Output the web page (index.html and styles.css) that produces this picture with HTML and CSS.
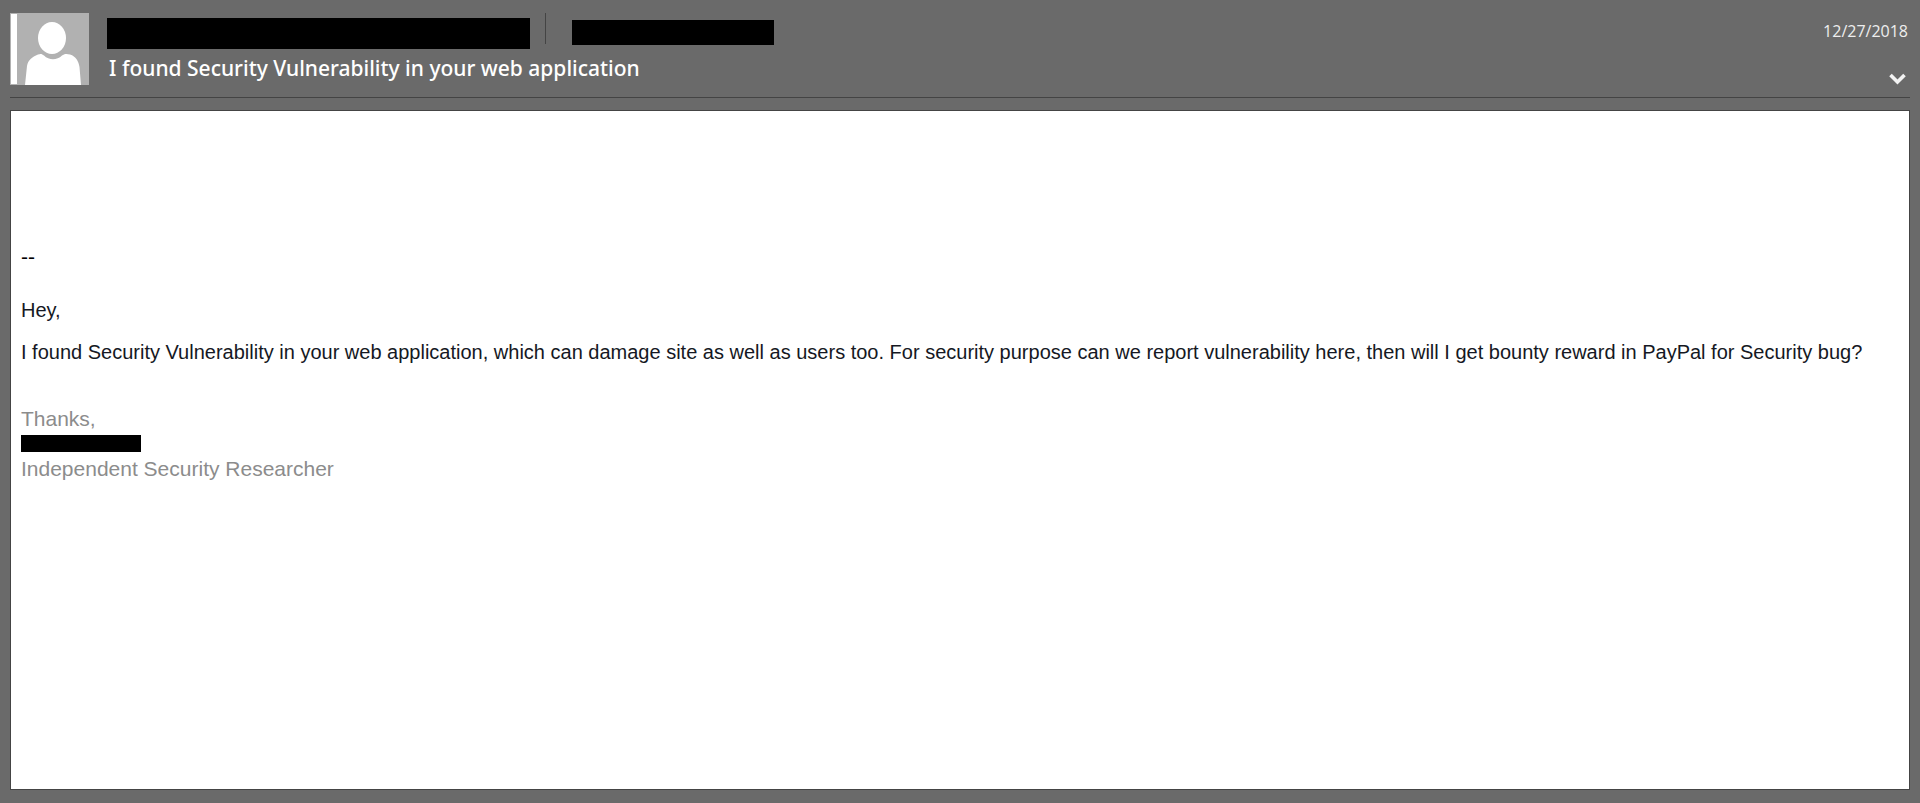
FILE: index.html
```
<!DOCTYPE html>
<html lang="en">
<head>
    <meta charset="UTF-8">
    <meta name="viewport" content="width=device-width, initial-scale=1.0">
    <title>I found Security Vulnerability in your web application</title>
    <link rel="stylesheet" href="styles.css">
</head>

<body>

<header class="mail-header">
    <div class="avatar">
        <svg viewBox="0 0 79 72" role="img" aria-label="Sender">
            <rect width="79" height="72" fill="#b1b1b1"/>
            <rect x="1" y="1" width="6" height="70" fill="#fff"/>
            <ellipse cx="42" cy="25" rx="14" ry="16" fill="#fff"/>
            <path fill="#fff" d="M15 72 L17 53 C18 47 22 44 28 41.500 C31 40.500 32 41 34 42.500 C39 47.500 47 47.500 52 42.500 C54 41 56 40.500 60 41.500 C66 43.500 68.500 48 69.500 54 L71 72 Z"/>
        </svg>
    </div>
    <div class="details">
        <div class="sender">
            <span class="redacted from"></span>
            <span class="divider"></span>
            <span class="redacted to"></span>
        </div>
        <h1>I found Security Vulnerability in your web application</h1>
    </div>
    <div class="side">
        <time datetime="2018-12-27">12/27/2018</time>
        <button class="expand" type="button" aria-label="Show details">
            <svg viewBox="0 0 17 12">
                <path d="M1.500 2 L8.500 9 L15.500 2" fill="none" stroke="#f3f3f3" stroke-width="3.600"/>
            </svg>
        </button>
    </div>
</header>

<main class="message">
    <p class="dashes">--</p>
    <p class="greeting">Hey,</p>
    <p class="text">I found Security Vulnerability in your web application, which can damage site as well as users too. For security purpose can we report vulnerability here, then will I get bounty reward in PayPal for Security bug?</p>
    <div class="signature">
        <p>Thanks,</p>
        <p class="name"><span class="redacted"></span></p>
        <p>Independent Security Researcher</p>
    </div>
</main>

</body>
</html>
```
FILE: styles.css
```
* {
    box-sizing: border-box;
}

body {
    font-family: 'Liberation Sans', Arial, sans-serif;
    margin: 0;
    padding: 13px 10px;
    background-color: #6a6a6a;
    display: flex;
    flex-direction: column;
    min-height: 100vh;
}

h1, p {
    margin: 0;
}

svg {
    display: block;
}

.redacted {
    display: block;
    background-color: #000;
}

/* Header with avatar, subject and date */
.mail-header {
    display: flex;
    padding-bottom: 12px;
    border-bottom: 1px solid #444;
    font-family: 'Segoe UI', 'Noto Sans', sans-serif;
}

.avatar {
    width: 79px;
    height: 72px;
    flex-shrink: 0;
    margin-right: 18px;
}

.details {
    flex: 1;
    min-width: 0;
}

.sender {
    display: flex;
    height: 38px;
}

.from {
    width: 423px;
    height: 31px;
    margin-top: 5px;
}

.divider {
    width: 1px;
    height: 31px;
    margin: 0 26px 0 15px;
    background-color: #444;
}

.to {
    width: 202px;
    height: 25px;
    margin-top: 7px;
}

h1 {
    padding-left: 2px;
    font-size: 21px;
    font-weight: 500;
    line-height: 34px;
    color: #fff;
}

.side {
    display: flex;
    flex-direction: column;
    justify-content: space-between;
    align-items: flex-end;
    padding-right: 2px;
}

time {
    font-family: 'Segoe UI', 'Open Sans', sans-serif;
    font-size: 16px;
    line-height: 36px;
    color: #eee;
}

.expand {
    padding: 0;
    border: none;
    background: none;
    cursor: pointer;
    margin-right: 2px;
}

.expand svg {
    width: 17px;
    height: 12px;
}

/* Message body */
.message {
    flex: 1;
    margin-top: 12px;
    padding: 133px 10px 20px;
    border: 1px solid #444;
    background-color: #fff;
    font-size: 20px;
    line-height: 25px;
    color: #151823;
}

.dashes {
    margin-bottom: 29px;
    font-size: 21px;
    color: #000;
}

.greeting {
    margin-bottom: 17px;
}

.text {
    margin-bottom: 41px;
}

.signature {
    font-size: 21px;
    color: #8c8c8c;
}

.name {
    height: 25px;
    padding-top: 4px;
}

.name .redacted {
    width: 120px;
    height: 17px;
}
```
